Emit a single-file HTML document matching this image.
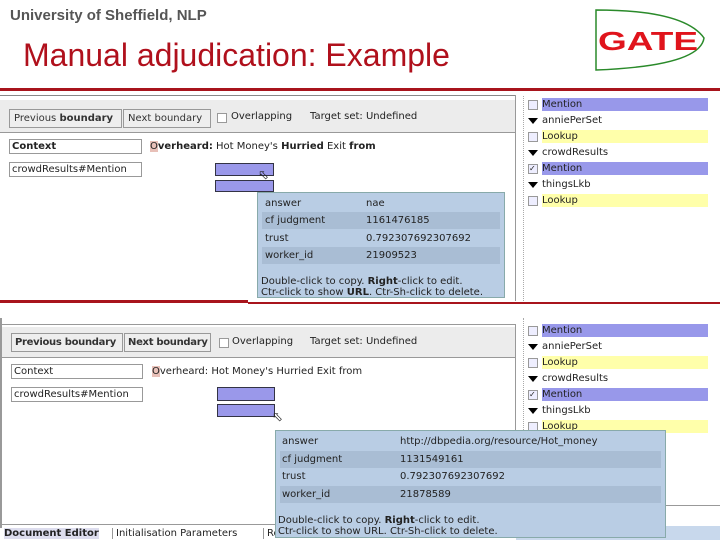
<!DOCTYPE html>
<html><head><style>
*{margin:0;padding:0;box-sizing:border-box}
body{width:720px;height:540px;position:relative;background:#fff;overflow:hidden;font-family:"DejaVu Sans","Liberation Sans",sans-serif;font-size:10px;color:#222}
.a{position:absolute;white-space:nowrap}
.btn{position:absolute;border:1px solid #999;background:#eee;height:19px;line-height:17px;padding-left:4px;font-size:10px;color:#333;white-space:nowrap;overflow:hidden}
.box{position:absolute;border:1px solid #999;background:#fff;height:15px;line-height:13px;padding-left:2px;font-size:10px;white-space:nowrap;overflow:hidden}
.hl{position:absolute;background:#9a98ea;border:1px solid #334}
.tip{position:absolute;background:#b9cde4;border:1px solid #8aa}
.row{position:absolute;left:4px;right:4px;height:17px;line-height:17px;font-size:10px}
.row.d{background:#a9bdd4}
.row span{position:absolute;white-space:nowrap}
.sb{position:absolute;height:13px;line-height:13px;font-size:10px}
.cb{position:absolute;width:10px;height:10px;border:1px solid #999;background:#eef}
.tri{position:absolute;width:0;height:0;border-left:5px solid transparent;border-right:5px solid transparent;border-top:6px solid #000}
</style></head><body>
<div class="a" style="left:10px;top:7px;font-family:'Liberation Sans',sans-serif;font-size:15px;font-weight:bold;color:#555">University of Sheffield, NLP</div>
<div class="a" style="left:23px;top:37px;font-family:'Liberation Sans',sans-serif;font-size:32px;color:#b0101c">Manual adjudication: Example</div>
<svg class="a" style="left:594px;top:8px" width="114" height="64"><path d="M2 2 Q90 2 110 30 Q106 58 2 62 Z" fill="#fff" stroke="#2a8a2a" stroke-width="1.5"/><text x="4" y="42" font-family="Liberation Sans" font-weight="bold" font-size="26" fill="#e0141c" textLength="100" lengthAdjust="spacingAndGlyphs">GATE</text></svg>
<div class="a" style="left:0;top:88px;width:720px;height:3px;background:#a8141c"></div>

<!-- top screenshot -->
<div class="a" style="left:0;top:95px;width:516px;height:1px;background:#888"></div>
<div class="a" style="left:0;top:100px;width:516px;height:32px;background:#ececec"></div>
<div class="a" style="left:0;top:132px;width:516px;height:1px;background:#999"></div>
<div class="a" style="left:515px;top:95px;width:1px;height:206px;background:#999"></div>
<div class="btn" style="left:9px;top:109px;width:113px">Previous <b>boundary</b></div>
<div class="btn" style="left:123px;top:109px;width:88px">Next boundary</div>
<div class="cb" style="left:217px;top:113px;background:#fff"></div>
<div class="a" style="left:231px;top:111px">Overlapping</div>
<div class="a" style="left:310px;top:111px">Target set: Undefined</div>
<div class="box" style="left:9px;top:139px;width:133px"><b>Context</b></div>
<div class="box" style="left:9px;top:162px;width:133px">crowdResults#Mention</div>
<div class="a" style="left:150px;top:141px"><span style="background:#e8c0b8">O</span><b>verheard:</b> Hot Money's <b>Hurried</b> Exit <b>from</b></div>
<div class="hl" style="left:215px;top:163px;width:59px;height:13px"></div>
<div class="hl" style="left:215px;top:180px;width:59px;height:12px"></div>
<div class="a" style="left:258px;top:168px;font-size:13px">&#11009;</div>
<div class="tip" style="left:257px;top:192px;width:248px;height:106px">
<div class="row" style="top:2px"><span style="left:3px">answer</span><span style="left:104px">nae</span></div>
<div class="row d" style="top:19px"><span style="left:3px">cf judgment</span><span style="left:104px">1161476185</span></div>
<div class="row" style="top:37px"><span style="left:3px">trust</span><span style="left:104px">0.792307692307692</span></div>
<div class="row d" style="top:54px"><span style="left:3px">worker_id</span><span style="left:104px">21909523</span></div>
<div class="a" style="left:3px;top:83px;line-height:11px">Double-click to copy. <b>Right</b>-click to edit.<br>Ctr-click to show <b>URL</b>. Ctr-Sh-click to delete.</div>
</div>
<div class="a" style="left:523px;top:96px;width:1px;height:205px;border-left:1px dotted #aaa"></div>
<div class="sb" style="left:542px;top:98px;width:166px;background:#9898ea">Mention</div>
<div class="sb" style="left:542px;top:114px">anniePerSet</div>
<div class="sb" style="left:542px;top:130px;width:166px;background:#ffffaa">Lookup</div>
<div class="sb" style="left:542px;top:146px">crowdResults</div>
<div class="sb" style="left:542px;top:162px;width:166px;background:#9898ea">Mention</div>
<div class="sb" style="left:542px;top:178px">thingsLkb</div>
<div class="sb" style="left:542px;top:194px;width:166px;background:#ffffaa">Lookup</div>
<div class="cb" style="left:528px;top:100px"></div>
<div class="tri" style="left:528px;top:118px"></div>
<div class="cb" style="left:528px;top:132px"></div>
<div class="tri" style="left:528px;top:150px"></div>
<div class="cb" style="left:528px;top:164px;font-size:8px;line-height:8px">&#10003;</div>
<div class="tri" style="left:528px;top:182px"></div>
<div class="cb" style="left:528px;top:196px"></div>

<div class="a" style="left:0;top:300px;width:248px;height:3px;background:#a8141c"></div>
<div class="a" style="left:248px;top:302px;width:472px;height:2px;background:#a8141c"></div>

<!-- bottom screenshot -->
<div class="a" style="left:0;top:318px;width:2px;height:210px;background:#999"></div>
<div class="a" style="left:0;top:324px;width:516px;height:1px;background:#999"></div>
<div class="a" style="left:2px;top:327px;width:513px;height:30px;background:#ececec"></div>
<div class="a" style="left:0;top:357px;width:516px;height:1px;background:#999"></div>
<div class="a" style="left:515px;top:324px;width:1px;height:200px;background:#999"></div>
<div class="btn" style="left:11px;top:333px;width:112px;font-weight:bold;padding-left:3px;letter-spacing:-0.3px">Previous boundary</div>
<div class="btn" style="left:124px;top:333px;width:87px;font-weight:bold;padding-left:3px;letter-spacing:-0.3px">Next boundary</div>
<div class="cb" style="left:219px;top:338px;background:#fff"></div>
<div class="a" style="left:232px;top:336px">Overlapping</div>
<div class="a" style="left:310px;top:336px">Target set: Undefined</div>
<div class="box" style="left:11px;top:364px;width:132px">Context</div>
<div class="box" style="left:11px;top:387px;width:132px">crowdResults#Mention</div>
<div class="a" style="left:152px;top:366px"><span style="background:#e8c0b8">O</span>verheard: Hot Money's Hurried Exit from</div>
<div class="hl" style="left:217px;top:387px;width:58px;height:14px"></div>
<div class="hl" style="left:217px;top:404px;width:58px;height:13px"></div>
<div class="a" style="left:272px;top:410px;font-size:13px">&#11009;</div>
<div class="a" style="left:2px;top:524px;width:513px;height:1px;background:#999"></div>
<div class="a" style="left:4px;top:528px;font-weight:bold;background:#dde">Document Editor</div>
<div class="a" style="left:112px;top:528px;border-left:1px solid #999;padding-left:3px">Initialisation Parameters</div>
<div class="a" style="left:263px;top:528px;border-left:1px solid #999;padding-left:3px">Relation Viewer</div>
<div class="a" style="left:523px;top:318px;width:1px;height:210px;border-left:1px dotted #aaa"></div>
<div class="a" style="left:516px;top:505px;width:204px;height:1px;background:#999"></div>
<div class="a" style="left:516px;top:526px;width:204px;height:14px;background:#c8d8ec"></div>
<div class="sb" style="left:542px;top:324px;width:166px;background:#9898ea">Mention</div>
<div class="sb" style="left:542px;top:340px">anniePerSet</div>
<div class="sb" style="left:542px;top:356px;width:166px;background:#ffffaa">Lookup</div>
<div class="sb" style="left:542px;top:372px">crowdResults</div>
<div class="sb" style="left:542px;top:388px;width:166px;background:#9898ea">Mention</div>
<div class="sb" style="left:542px;top:404px">thingsLkb</div>
<div class="sb" style="left:542px;top:420px;width:166px;background:#ffffaa">Lookup</div>
<div class="cb" style="left:528px;top:326px"></div>
<div class="tri" style="left:528px;top:344px"></div>
<div class="cb" style="left:528px;top:358px"></div>
<div class="tri" style="left:528px;top:376px"></div>
<div class="cb" style="left:528px;top:390px;font-size:8px;line-height:8px">&#10003;</div>
<div class="tri" style="left:528px;top:408px"></div>
<div class="cb" style="left:528px;top:422px"></div>
<div class="tip" style="left:275px;top:430px;width:391px;height:108px">
<div class="row" style="top:2px"><span style="left:2px">answer</span><span style="left:120px">http://dbpedia.org/resource/Hot_money</span></div>
<div class="row d" style="top:20px"><span style="left:2px">cf judgment</span><span style="left:120px">1131549161</span></div>
<div class="row" style="top:37px"><span style="left:2px">trust</span><span style="left:120px">0.792307692307692</span></div>
<div class="row d" style="top:55px"><span style="left:2px">worker_id</span><span style="left:120px">21878589</span></div>
<div class="a" style="left:2px;top:84px;line-height:11px">Double-click to copy. <b>Right</b>-click to edit.<br>Ctr-click to show URL. Ctr-Sh-click to delete.</div>
</div>
</body></html>
